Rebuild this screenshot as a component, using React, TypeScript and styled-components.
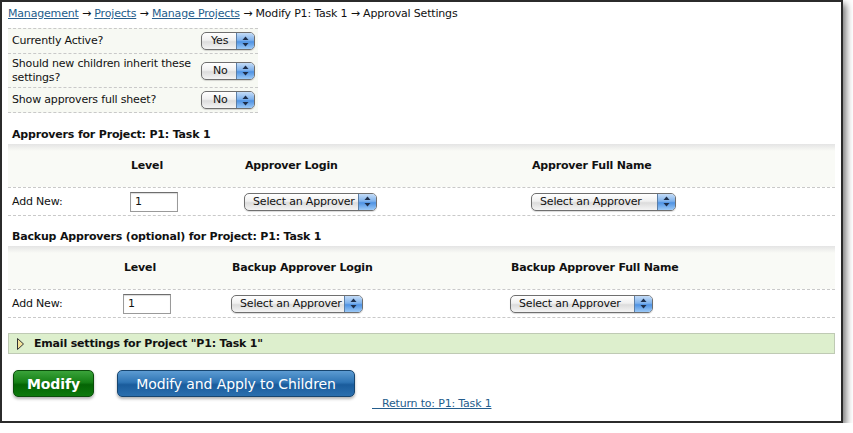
import styled, { createGlobalStyle } from 'styled-components';

const GlobalStyle = createGlobalStyle`
  html, body {
    margin: 0;
    padding: 0;
    background: #ffffff;
  }
  body {
    font-family: 'DejaVu Sans', Verdana, sans-serif;
    font-size: 11px;
    letter-spacing: -0.18px;
    color: #111;
  }
`;

const Window = styled.div`
  width: 843px;
  height: 423px;
  box-sizing: border-box;
  border: 2px solid #2b2b2b;
  padding: 5px 6px 0 6px;
  background: #fff;
  box-shadow: 3px 4px 7px rgba(0, 0, 0, 0.55);
`;

const Crumbs = styled.div`
  line-height: 14px;
  white-space: nowrap;
`;

const Link = styled.a`
  color: #245d8c;
  text-decoration: underline;
  cursor: pointer;
`;

const SettingsTable = styled.div`
  margin-top: 7px;
  width: 250px;
  background: #f7f9f3;
`;

const SettingRow = styled.div<{ $h: number }>`
  display: grid;
  grid-template-columns: 193px 1fr;
  align-items: center;
  height: ${(p) => p.$h}px;
  border-top: 1px dashed #c9c9c9;
  &:last-child {
    border-bottom: 1px dashed #c9c9c9;
  }
`;

const SettingLabel = styled.div`
  padding-left: 4px;
  line-height: 14px;
`;

const Select = styled.div<{ $w: number }>`
  display: inline-flex;
  align-items: stretch;
  width: ${(p) => p.$w}px;
  height: 18px;
  box-sizing: border-box;
  border: 1px solid #6f6f6f;
  border-radius: 5px;
  overflow: hidden;
  background: linear-gradient(#ffffff, #f0f0f0 45%, #dcdcdc 55%, #f4f4f4);
  box-shadow: 0 1px 1px rgba(0, 0, 0, 0.15);
`;

const SelectText = styled.span<{ $pad: number }>`
  flex: 1;
  padding-left: ${(p) => p.$pad}px;
  line-height: 16px;
  font-size: 11px;
  color: #111;
  white-space: nowrap;
`;

const SelectCap = styled.span`
  width: 17px;
  display: flex;
  align-items: center;
  justify-content: center;
  border-left: 1px solid #5b7ea6;
  background: linear-gradient(#c4dcf7, #7fb2ec 45%, #4f93e3 55%, #9cc9f6);
`;

const SectionTitle = styled.div<{ $top: number }>`
  margin-top: ${(p) => p.$top}px;
  margin-bottom: 2px;
  padding-left: 4px;
  line-height: 14px;
  font-weight: bold;
`;

const Band = styled.div`
  background: linear-gradient(#e4e4e4, #f9faf6 7px, #f9faf6);
`;

const GridRow = styled.div<{ $cols: string; $h: number; $body?: boolean }>`
  display: grid;
  grid-template-columns: ${(p) => p.$cols};
  align-items: center;
  height: ${(p) => p.$h}px;
  border-top: ${(p) => (p.$body ? '1px dashed #c9c9c9' : 'none')};
  border-bottom: ${(p) => (p.$body ? '1px dashed #c9c9c9' : 'none')};
  background: ${(p) => (p.$body ? '#ffffff' : 'transparent')};
`;

const HeadCell = styled.div`
  padding-left: 1px;
  font-weight: bold;
  line-height: 14px;
`;

const Cell = styled.div<{ $pad?: number }>`
  padding-left: ${(p) => p.$pad ?? 0}px;
  display: flex;
  align-items: center;
`;

const LevelInput = styled.input`
  width: 48px;
  height: 20px;
  box-sizing: border-box;
  border: 1px solid #9a9a9a;
  border-top-color: #6e6e6e;
  padding: 0 4px;
  font-family: 'DejaVu Sans', Verdana, sans-serif;
  font-size: 11px;
  color: #111;
  background: #fff;
  box-shadow: inset 0 1px 1px rgba(0, 0, 0, 0.15);
  outline: none;
`;

const EmailBar = styled.div`
  margin-top: 15px;
  height: 21px;
  box-sizing: border-box;
  border: 1px solid #bfcab4;
  background: #ddefcd;
  display: flex;
  align-items: center;
  gap: 10px;
  padding-left: 8px;
  font-weight: bold;
`;

const Actions = styled.div`
  margin-top: 16px;
  display: flex;
  align-items: flex-start;
  padding-left: 5px;
`;

const Button = styled.button<{ $tone: 'green' | 'blue'; $w: number }>`
  width: ${(p) => p.$w}px;
  height: 27px;
  margin-right: ${(p) => (p.$tone === 'green' ? 23 : 17)}px;
  border-radius: 5px;
  border: 1px solid ${(p) => (p.$tone === 'green' ? '#0b4d0b' : '#17456f')};
  background: ${(p) =>
    p.$tone === 'green'
      ? 'linear-gradient(#3aa33a, #168016 45%, #056405 55%, #0c7a0c)'
      : 'linear-gradient(#5c9bd2, #2f75b5 45%, #1a5c9c 55%, #2b6fae)'};
  color: #fff;
  font-family: 'DejaVu Sans', Verdana, sans-serif;
  font-size: 14px;
  letter-spacing: -0.1px;
  font-weight: ${(p) => (p.$tone === 'green' ? 'bold' : 'normal')};
  padding: 0;
  box-shadow: 0 2px 3px rgba(0, 0, 0, 0.3);
  cursor: pointer;
`;

const ReturnLink = styled(Link)`
  margin-top: 27px;
  line-height: 14px;
  white-space: pre;
`;

const Arrows = () => (
  <svg width="7" height="11" viewBox="0 0 7 11">
    <polygon points="3.5,0.5 6.5,4 0.5,4" fill="#1d2e4a" />
    <polygon points="0.5,7 6.5,7 3.5,10.5" fill="#1d2e4a" />
  </svg>
);

const AquaSelect = ({ w, label, pad = 8 }: { w: number; label: string; pad?: number }) => (
  <Select $w={w}>
    <SelectText $pad={pad}>{label}</SelectText>
    <SelectCap>
      <Arrows />
    </SelectCap>
  </Select>
);

const settings = [
  { label: 'Currently Active?', value: 'Yes', h: 24 },
  { label: 'Should new children inherit these settings?', value: 'No', h: 33 },
  { label: 'Show approvers full sheet?', value: 'No', h: 24 },
];

type ApproverTableProps = {
  cols: string;
  login: string;
  fullName: string;
  loginW: number;
  nameW: number;
};

const ApproverTable = ({ cols, login, fullName, loginW, nameW }: ApproverTableProps) => (
  <Band>
    <GridRow $cols={cols} $h={43}>
      <HeadCell />
      <HeadCell>Level</HeadCell>
      <HeadCell>{login}</HeadCell>
      <HeadCell>{fullName}</HeadCell>
    </GridRow>
    <GridRow $cols={cols} $h={27} $body>
      <Cell $pad={4}>Add New:</Cell>
      <Cell>
        <LevelInput defaultValue="1" />
      </Cell>
      <Cell>
        <AquaSelect w={loginW} label="Select an Approver" />
      </Cell>
      <Cell>
        <AquaSelect w={nameW} label="Select an Approver" />
      </Cell>
    </GridRow>
  </Band>
);

export default function App() {
  return (
    <>
      <GlobalStyle />
      <Window>
        <Crumbs>
          <Link>Management</Link> → <Link>Projects</Link> → <Link>Manage Projects</Link> → Modify P1:
          Task 1 → Approval Settings
        </Crumbs>

        <SettingsTable>
          {settings.map((s) => (
            <SettingRow key={s.label} $h={s.h}>
              <SettingLabel>{s.label}</SettingLabel>
              <AquaSelect w={54} label={s.value} pad={s.value === 'Yes' ? 9 : 11} />
            </SettingRow>
          ))}
        </SettingsTable>

        <SectionTitle $top={15}>Approvers for Project: P1: Task 1</SectionTitle>
        <ApproverTable
          cols="122px 114px 287px 1fr"
          login="Approver Login"
          fullName="Approver Full Name"
          loginW={133}
          nameW={145}
        />

        <SectionTitle $top={14}>Backup Approvers (optional) for Project: P1: Task 1</SectionTitle>
        <ApproverTable
          cols="115px 108px 279px 1fr"
          login="Backup Approver Login"
          fullName="Backup Approver Full Name"
          loginW={132}
          nameW={143}
        />

        <EmailBar>
          <svg width="7" height="12" viewBox="0 0 7 12">
            <polygon points="0.5,0.5 6.5,6 0.5,11.5" fill="#f3e49a" stroke="#333" strokeWidth="1" />
          </svg>
          Email settings for Project "P1: Task 1"
        </EmailBar>

        <Actions>
          <Button $tone="green" $w={81}>
            Modify
          </Button>
          <Button $tone="blue" $w={238}>
            Modify and Apply to Children
          </Button>
          <ReturnLink>{'   Return to: P1: Task 1'}</ReturnLink>
        </Actions>
      </Window>
    </>
  );
}
